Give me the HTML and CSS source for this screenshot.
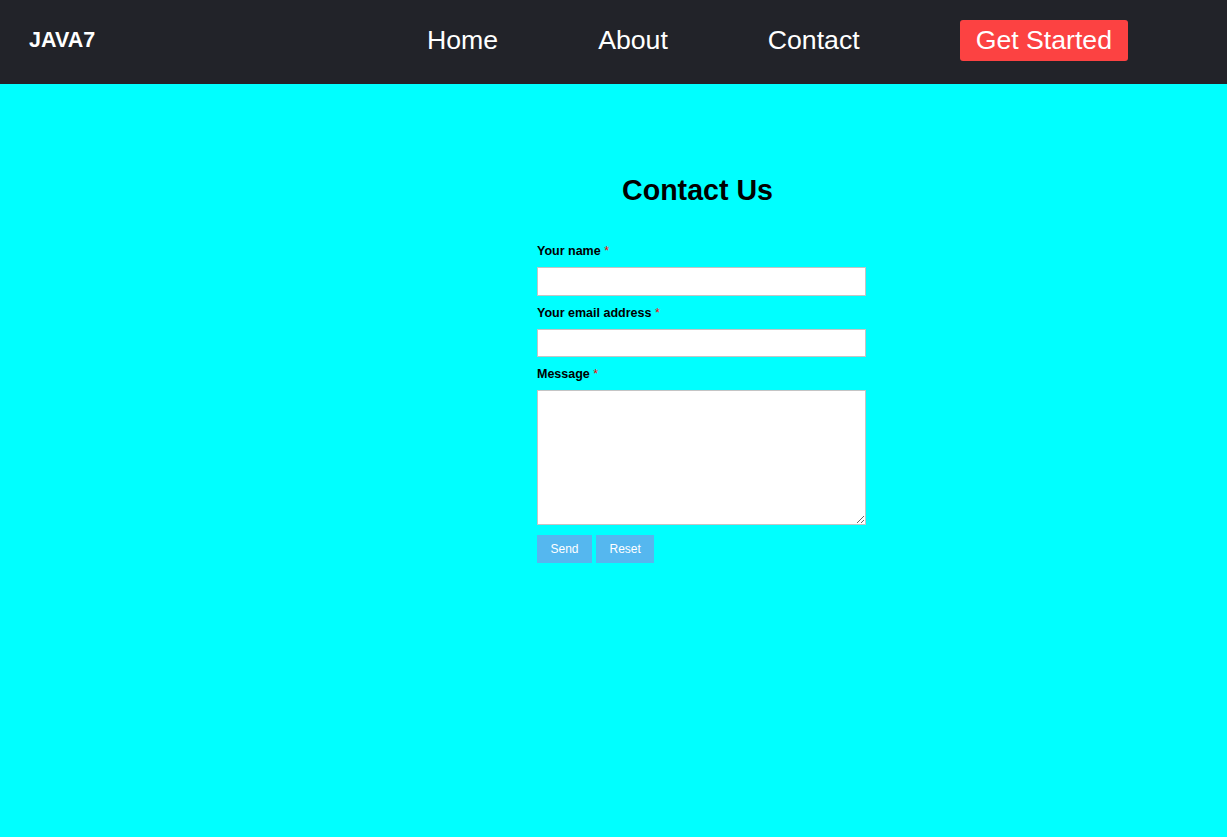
FILE: index.html
```html
<!DOCTYPE html>
<html lang="en">
<head>
<meta charset="utf-8">
<title>JAVA7 - Contact</title>
<link rel="stylesheet" href="styles.css">
</head>
<body>
<header class="header">
  <div class="logo">JAVA7</div>
  <nav class="nav">
    <a class="nav-link" href="#">Home</a>
    <a class="nav-link" href="#">About</a>
    <a class="nav-link" href="#">Contact</a>
    <a class="nav-btn" href="#">Get Started</a>
  </nav>
</header>
<main class="main">
  <section class="contact">
    <h2 class="title">Contact Us</h2>
    <form class="form">
      <label class="label" for="name">Your name <span class="req">*</span></label>
      <input class="field" id="name" type="text">
      <label class="label" for="email">Your email address <span class="req">*</span></label>
      <input class="field" id="email" type="email">
      <label class="label" for="msg">Message <span class="req">*</span></label>
      <textarea class="field area" id="msg"></textarea>
      <div class="actions">
        <button class="btn" type="submit">Send</button>
        <button class="btn" type="reset">Reset</button>
      </div>
    </form>
  </section>
</main>
</body>
</html>
```
FILE: styles.css
```css
* { box-sizing: border-box; }
html, body { margin: 0; padding: 0; }
body {
  background: #00ffff;
  font-family: "Liberation Sans", Arial, sans-serif;
  min-height: 837px;
}
.header {
  background: #222329;
  height: 84px;
  padding: 0 99px 3px 29px;
  display: flex;
  align-items: center;
}
.logo {
  color: #fff;
  font-weight: bold;
  font-size: 21.5px;
}
.nav {
  margin-left: auto;
  display: flex;
  align-items: center;
  gap: 100px;
}
.nav-link {
  color: #fff;
  text-decoration: none;
  font-size: 26.67px;
}
.nav-btn {
  color: #fff;
  text-decoration: none;
  font-size: 26.67px;
  background: #fc4242;
  border-radius: 3px;
  padding: 5px 16px;
}
.main {
  padding-top: 90px;
  padding-left: 537px;
}
.contact {
  width: 321px;
}
.title {
  margin: 0 0 37px;
  text-align: center;
  font-size: 28.6px;
  font-weight: bold;
  color: #000;
}
.form {
  display: flex;
  flex-direction: column;
  align-items: flex-start;
  width: 329px;
}
.label {
  font-size: 12.5px;
  font-weight: bold;
  line-height: 14px;
  margin-bottom: 9px;
  color: #000;
}
.req { color: #ff0000; font-weight: normal; }
.field {
  width: 329px;
  height: 28.5px;
  border: 1px solid #c4c4c4;
  background: #fff;
  margin: 0 0 10px;
  padding: 3px;
  font-family: inherit;
}
.area {
  height: 135px;
  resize: both;
}
.actions {
  display: flex;
  gap: 4px;
}
.btn {
  background: #55b7ef;
  color: #fff;
  border: none;
  height: 28px;
  padding: 0 13.5px;
  font-family: inherit;
  font-size: 12px;
}
```
